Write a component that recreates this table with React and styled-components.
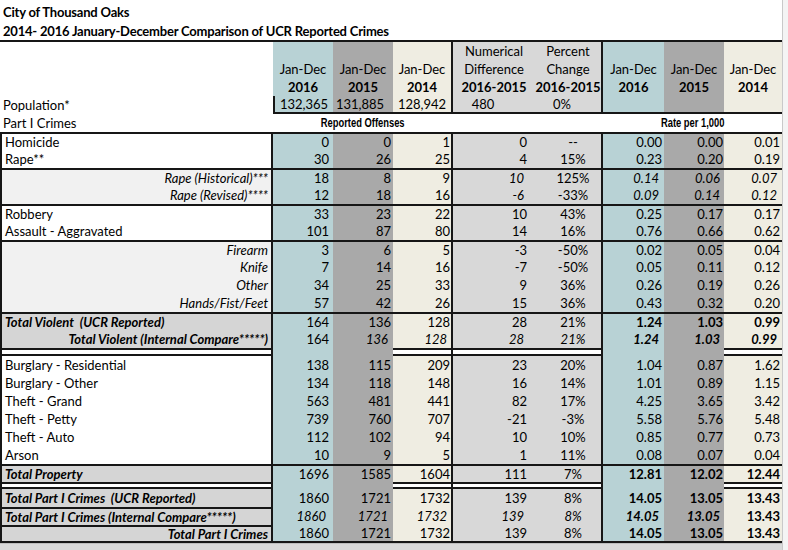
import React from 'react';
import styled, { createGlobalStyle } from 'styled-components';

const C = {
  teal: '#b8d2d5',
  gray: '#a9a9a9',
  cream: '#efede2',
  lg: '#d8d8d8',
  sub: '#f1f1f1',
  tot: '#d5d5d5',
  white: '#ffffff',
};
const LINE = '2px solid #161616';
const COLS = '273px 60px 60px 60px 82px 68px 61px 60px 58px';
const COL_BG = [C.white, C.teal, C.gray, C.cream, C.lg, C.lg, C.teal, C.gray, C.cream];
const GAP_BG = [C.white, C.teal, C.gray, C.white, C.white, C.white, C.teal, C.gray, C.white];
const PAD = [3, 4, 2, 1, 8, 0, 2, 1, 2];

const Global = createGlobalStyle`
  html, body { margin: 0; padding: 0; background: #fff; }
  body { font-family: Lato, "Liberation Sans", sans-serif; font-size: 13px; color: #000; }
`;

const Page = styled.div`
  width: 788px;
  height: 550px;
  overflow: hidden;
  display: flex;
  background: #fff;
`;
const Main = styled.div`
  width: 782px;
  display: flex;
  flex-direction: column;
`;
const Edge = styled.div`
  flex: 1;
  border-left: 1px solid #c9c9c9;
  background: #f4f4f4;
`;
const Titles = styled.header`
  box-sizing: border-box;
  height: 42px;
  padding: 3px 0 0 3px;
  font-weight: 700;
  line-height: 19px;
  letter-spacing: -0.2px;
  border-bottom: ${LINE};
`;
const Sheet = styled.div`
  display: flex;
  flex-direction: column;
`;
const Bottom = styled.div`
  flex: 1;
  background: #d9d9d9;
  border-top: 1px solid #bdbdbd;
`;
const Row = styled.div`
  display: grid;
  grid-template-columns: ${COLS};
  height: ${(p) => p.$h || 18}px;
`;
const Cell = styled.div`
  box-sizing: border-box;
  min-width: 0;
  overflow: hidden;
  white-space: pre;
  display: flex;
  align-items: center;
  justify-content: ${(p) => p.$justify || 'flex-end'};
  grid-column: ${(p) => (p.$span ? `span ${p.$span}` : 'auto')};
  background: ${(p) => p.$bg};
  padding: 0 ${(p) => p.$pr || 0}px 0 ${(p) => p.$pl || 0}px;
  font-style: ${(p) => (p.$i ? 'italic' : 'normal')};
  font-weight: ${(p) => (p.$b ? 700 : 400)};
  border-top: ${(p) => (p.$bt ? LINE : '0')};
  border-bottom: ${(p) => (p.$bb ? LINE : '0')};
  border-left: ${(p) => (p.$bl ? LINE : '0')};
  border-right: ${(p) => (p.$br ? LINE : '0')};
`;
const Narrow = styled.span`
  display: inline-block;
  font-family: "Liberation Sans", Arial, sans-serif;
  font-weight: 700;
  font-size: 12px;
  transform: scaleX(0.78);
  letter-spacing: 0;
`;

const v = (x, f = '') => ({ x, i: f.includes('i'), b: f.includes('b') });
const n = (...xs) => xs.map((x) => (typeof x === 'object' ? x : v(x)));

const BODY = [
  { label: 'Homicide', top: 'full', vals: n(0, 0, 1, 0, '--', '0.00', '0.00', '0.01') },
  { label: 'Rape**', vals: n(30, 26, 25, 4, '15%', '0.23', '0.20', '0.19') },
  { label: 'Rape (Historical)***', kind: 'sub', top: 'full', vals: n(18, 8, 9, v(10, 'i'), '125%', v('0.14', 'i'), v('0.06', 'i'), v('0.07', 'i')) },
  { label: 'Rape (Revised)****', kind: 'sub', vals: n(12, 18, 16, v(-6, 'i'), '-33%', v('0.09', 'i'), v('0.14', 'i'), v('0.12', 'i')) },
  { label: 'Robbery', top: 'full', vals: n(33, 23, 22, 10, '43%', '0.25', '0.17', '0.17') },
  { label: 'Assault - Aggravated', vals: n(101, 87, 80, 14, '16%', '0.76', '0.66', '0.62') },
  { label: 'Firearm', kind: 'sub', top: 'full', vals: n(3, 6, 5, -3, '-50%', '0.02', '0.05', '0.04') },
  { label: 'Knife', kind: 'sub', vals: n(7, 14, 16, -7, '-50%', '0.05', '0.11', '0.12') },
  { label: 'Other', kind: 'sub', vals: n(34, 25, 33, 9, '36%', '0.26', '0.19', '0.26') },
  { label: 'Hands/Fist/Feet', kind: 'sub', vals: n(57, 42, 26, 15, '36%', '0.43', '0.32', '0.20') },
  { label: 'Total Violent  (UCR Reported)', kind: 'total', top: 'full', vals: n(164, 136, 128, 28, '21%', v('1.24', 'b'), v('1.03', 'b'), v('0.99', 'b')) },
  { label: 'Total Violent (Internal Compare*****)', kind: 'total', right: true, vals: n(164, v(136, 'i'), v(128, 'i'), v(28, 'i'), v('21%', 'i'), v('1.24', 'bi'), v('1.03', 'bi'), v('0.99', 'bi')) },
  { gap: true, h: 8 },
  { label: 'Burglary - Residential', vals: n(138, 115, 209, 23, '20%', '1.04', '0.87', '1.62') },
  { label: 'Burglary - Other', vals: n(134, 118, 148, 16, '14%', '1.01', '0.89', '1.15') },
  { label: 'Theft - Grand', vals: n(563, 481, 441, 82, '17%', '4.25', '3.65', '3.42') },
  { label: 'Theft - Petty', vals: n(739, 760, 707, -21, '-3%', '5.58', '5.76', '5.48') },
  { label: 'Theft - Auto', vals: n(112, 102, 94, 10, '10%', '0.85', '0.77', '0.73') },
  { label: 'Arson', vals: n(10, 9, 5, 1, '11%', '0.08', '0.07', '0.04') },
  { label: 'Total Property', kind: 'total', top: 'full', vals: n(1696, 1585, 1604, 111, '7%', v('12.81', 'b'), v('12.02', 'b'), v('12.44', 'b')) },
  { gap: true, h: 7 },
  { label: 'Total Part I Crimes  (UCR Reported)', kind: 'total', vals: n(1860, 1721, 1732, 139, '8%', v('14.05', 'b'), v('13.05', 'b'), v('13.43', 'b')) },
  { label: 'Total Part I Crimes (Internal Compare*****)', kind: 'total', top: 'label', vals: n(v(1860, 'i'), v(1721, 'i'), v(1732, 'i'), v(139, 'i'), v('8%', 'i'), v('14.05', 'bi'), v('13.05', 'bi'), v('13.43', 'b')) },
  { label: 'Total Part I Crimes', kind: 'total', top: 'label', right: true, last: true, vals: n(1860, 1721, 1732, 139, '8%', v('14.05', 'b'), v('13.05', 'b'), v('13.43', 'b')) },
];

const vRule = (c) => c === 3 || c === 5;

function HeaderRow({ texts, bold }) {
  return (
    <Row>
      {COL_BG.map((bg, c) => (
        <Cell key={c} $bg={bg} $justify="center" $b={bold} $br={vRule(c)}>
          {texts[c] || ''}
        </Cell>
      ))}
    </Row>
  );
}

function PopulationRow() {
  const vals = ['Population*', '132,365', '131,885', '128,942', '480', '0%', '', '', ''];
  return (
    <Row>
      {COL_BG.map((bg, c) => (
        <Cell
          key={c}
          $bg={bg}
          $justify={c === 0 ? 'flex-start' : 'center'}
          $pl={c === 0 ? 3 : 0}
          $pr={c === 4 ? 22 : c === 5 ? 12 : c === 2 ? 6 : 0}
          $bl={c === 1}
          $bb={c > 0}
          $br={vRule(c)}
        >
          {vals[c]}
        </Cell>
      ))}
    </Row>
  );
}

function SectionRow() {
  return (
    <Row>
      <Cell $bg={C.white} $justify="flex-start" $pl={3}>Part I Crimes</Cell>
      <Cell $bg={C.white} $span={3} $justify="center">
        <Narrow>Reported Offenses</Narrow>
      </Cell>
      <Cell $bg={C.white} $span={2} />
      <Cell $bg={C.white} $span={3} $justify="center">
        <Narrow>Rate per 1,000</Narrow>
      </Cell>
    </Row>
  );
}

function GapRow({ h }) {
  return (
    <Row $h={h}>
      {GAP_BG.map((bg, c) => {
        const ruled = bg === C.white;
        return (
          <Cell
            key={c}
            $bg={bg}
            $bt={ruled}
            $bb={ruled}
            $bl={c === 0}
            $br={c === 0 || vRule(c)}
          />
        );
      })}
    </Row>
  );
}

function DataRow({ row }) {
  const labelBg = row.kind === 'sub' ? C.sub : row.kind === 'total' ? C.tot : C.white;
  const right = row.kind === 'sub' || row.right;
  const full = row.top === 'full';
  return (
    <Row>
      <Cell
        $bg={labelBg}
        $justify={right ? 'flex-end' : 'flex-start'}
        $pl={3}
        $pr={3}
        $i={row.kind === 'sub' || row.kind === 'total'}
        $b={row.kind === 'total'}
        $bt={full || row.top === 'label'}
        $bb={row.last}
        $bl
        $br
      >
        {row.label}
      </Cell>
      {row.vals.map((val, k) => {
        const c = k + 1;
        return (
          <Cell
            key={c}
            $bg={COL_BG[c]}
            $justify={c === 5 ? 'center' : 'flex-end'}
            $pr={PAD[c] + (val.i && c !== 5 ? 3 : 0)}
            $pl={c === 5 ? 10 : 0}
            $i={val.i}
            $b={val.b}
            $bt={full}
            $bb={row.last}
            $br={vRule(c)}
          >
            {String(val.x)}
          </Cell>
        );
      })}
    </Row>
  );
}

export default function App() {
  return (
    <Page>
      <Global />
      <Main>
        <Titles>
          <div>City of Thousand Oaks</div>
          <div>2014- 2016 January-December Comparison of UCR Reported Crimes</div>
        </Titles>
        <Sheet>
          <HeaderRow texts={['', '', '', '', 'Numerical', 'Percent']} />
          <HeaderRow texts={['', 'Jan-Dec', 'Jan-Dec', 'Jan-Dec', 'Difference', 'Change', 'Jan-Dec', 'Jan-Dec', 'Jan-Dec']} />
          <HeaderRow bold texts={['', '2016', '2015', '2014', '2016-2015', '2016-2015', '2016', '2015', '2014']} />
          <PopulationRow />
          <SectionRow />
          {BODY.map((row, idx) =>
            row.gap ? <GapRow key={idx} h={row.h} /> : <DataRow key={idx} row={row} />
          )}
        </Sheet>
        <Bottom />
      </Main>
      <Edge />
    </Page>
  );
}
